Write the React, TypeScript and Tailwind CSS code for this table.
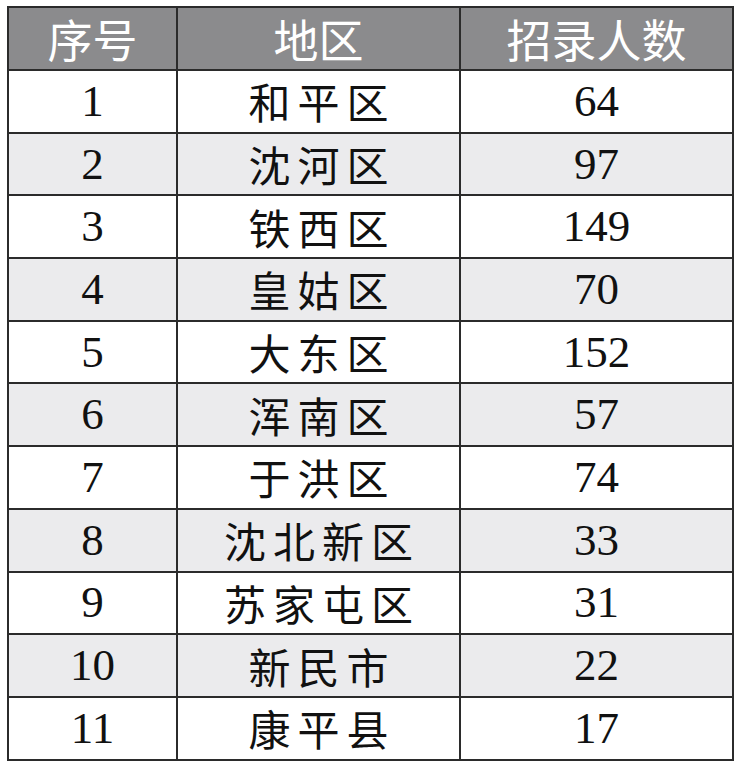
const rows: [string, string, string][] = [
  ["1", "和平区", "64"],
  ["2", "沈河区", "97"],
  ["3", "铁西区", "149"],
  ["4", "皇姑区", "70"],
  ["5", "大东区", "152"],
  ["6", "浑南区", "57"],
  ["7", "于洪区", "74"],
  ["8", "沈北新区", "33"],
  ["9", "苏家屯区", "31"],
  ["10", "新民市", "22"],
  ["11", "康平县", "17"],
];

const num = "font-['Liberation_Serif',serif] text-[45px] leading-none";
const cjk = "font-['Noto_Sans_CJK_SC',sans-serif] text-[42px] font-normal leading-none tracking-[7px] pl-[7px]";

export default function App() {
  return (
    <div className="min-h-[771px] w-[737px] bg-white pl-[7px] pt-[6px]">
      <table className="w-[725px] table-fixed border-collapse border-[2.5px] border-[#2b2b2b] text-[#111]">
        <colgroup>
          <col className="w-[169px]" />
          <col className="w-[283px]" />
          <col className="w-[273px]" />
        </colgroup>
        <thead>
          <tr className="h-[63px] bg-[#8b8b8d] text-white">
            {["序号", "地区", "招录人数"].map((h) => (
              <th
                key={h}
                className="border-[2.5px] border-[#2b2b2b] text-center font-['Noto_Sans_CJK_SC',sans-serif] text-[45px] font-normal leading-none"
              >
                {h}
              </th>
            ))}
          </tr>
        </thead>
        <tbody>
          {rows.map(([no, area, count], i) => (
            <tr
              key={no}
              className={i % 2 === 1 ? "h-[62.7px] bg-[#ebebed]" : "h-[62.7px] bg-white"}
            >
              <td className={`border-[2.5px] border-[#2b2b2b] text-center ${num}`}>{no}</td>
              <td className={`border-[2.5px] border-[#2b2b2b] text-center ${cjk}`}>{area}</td>
              <td className={`border-[2.5px] border-[#2b2b2b] text-center ${num}`}>{count}</td>
            </tr>
          ))}
        </tbody>
      </table>
    </div>
  );
}
